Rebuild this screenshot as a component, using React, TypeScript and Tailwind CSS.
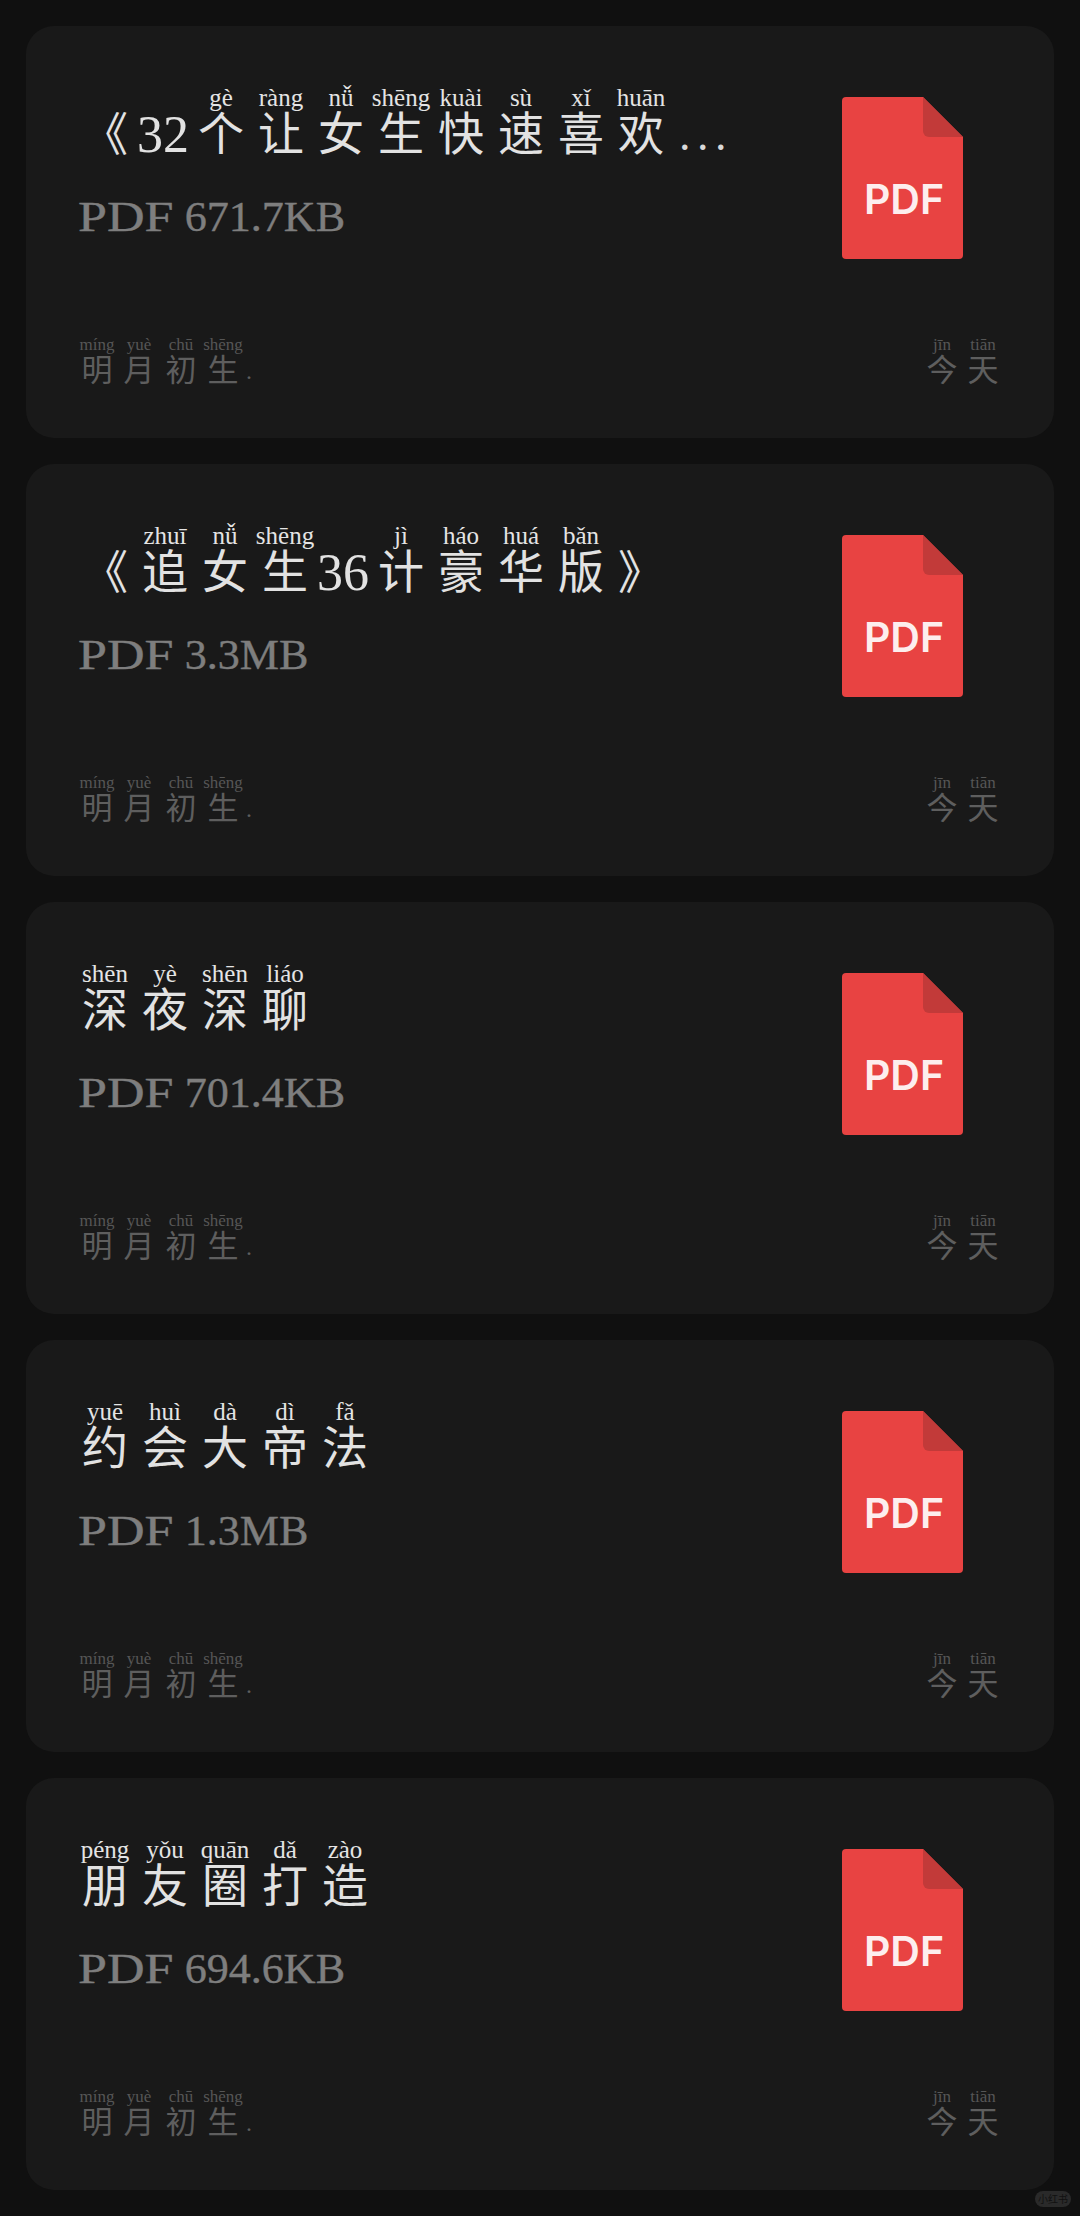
import React from 'react';

type Cell = { han: string; py?: string };

const FILES: { title: Cell[]; size: string }[] = [
  {
    title: [
      { han: '《' }, { han: '32' }, { han: '个', py: 'gè' }, { han: '让', py: 'ràng' }, { han: '女', py: 'nǚ' },
      { han: '生', py: 'shēng' }, { han: '快', py: 'kuài' }, { han: '速', py: 'sù' }, { han: '喜', py: 'xǐ' },
      { han: '欢', py: 'huān' }, { han: '...' },
    ],
    size: '671.7KB',
  },
  {
    title: [
      { han: '《' }, { han: '追', py: 'zhuī' }, { han: '女', py: 'nǚ' }, { han: '生', py: 'shēng' }, { han: '36' },
      { han: '计', py: 'jì' }, { han: '豪', py: 'háo' }, { han: '华', py: 'huá' }, { han: '版', py: 'bǎn' }, { han: '》' },
    ],
    size: '3.3MB',
  },
  {
    title: [{ han: '深', py: 'shēn' }, { han: '夜', py: 'yè' }, { han: '深', py: 'shēn' }, { han: '聊', py: 'liáo' }],
    size: '701.4KB',
  },
  {
    title: [{ han: '约', py: 'yuē' }, { han: '会', py: 'huì' }, { han: '大', py: 'dà' }, { han: '帝', py: 'dì' }, { han: '法', py: 'fǎ' }],
    size: '1.3MB',
  },
  {
    title: [{ han: '朋', py: 'péng' }, { han: '友', py: 'yǒu' }, { han: '圈', py: 'quān' }, { han: '打', py: 'dǎ' }, { han: '造', py: 'zào' }],
    size: '694.6KB',
  },
];

// 文件图标
const PdfIcon = () => (
  <svg width="121" height="162" viewBox="0 0 121 162" className="mt-[11px] mr-[39px] shrink-0">
    <path d="M4 0H81L121 40V158a4 4 0 0 1-4 4H4a4 4 0 0 1-4-4V4a4 4 0 0 1 4-4Z" fill="#e84342" />
    <path d="M81 0L121 40H87a6 6 0 0 1-6-6Z" fill="#c23a39" />
    <text x="62" y="117" textAnchor="middle" fontSize="41" fontWeight="600" fill="#fdeeee" fontFamily="Inter, sans-serif">PDF</text>
  </svg>
);

const TitleCell = ({ han, py }: Cell) => {
  if (!py && /^\d+$/.test(han)) {
    return <span className="self-end -ml-px text-[52px] leading-[50px] w-[51px] text-[#e2e2e2]">{han}</span>;
  }
  if (han === '...') {
    return <span className="self-end ml-[5px] text-[46px] leading-[50px] tracking-[6.5px] text-[#d8d8d8]">{han}</span>;
  }
  return (
    <span className="flex flex-col items-center w-[54px]">
      <span className="h-[24px] text-[25px] leading-[24px] whitespace-nowrap text-[#e4e4e4]">{py}</span>
      <span className="text-[46px] leading-[50px] text-[#e2e2e2]">{han}</span>
    </span>
  );
};

const SmallCell = ({ han, py }: Cell) => (
  <span className="flex flex-col items-center w-[38px]">
    <span className="text-[17px] leading-[18px] whitespace-nowrap text-[#565656]">{py}</span>
    <span className="text-[31px] leading-[34px] text-[#5e5e5e]">{han}</span>
  </span>
);

const FileCard = ({ title, size }: { title: Cell[]; size: string }) => (
  <div className="flex flex-col h-[412px] rounded-[28px] bg-[#191919] pt-[60px] pb-[50px] px-[52px]">
    <div className="flex justify-between items-start">
      <div className="flex flex-col">
        <div className="flex gap-[6px] h-[74px]">
          {title.map((c, i) => <TitleCell key={i} {...c} />)}
        </div>
        <p className="mt-[33px] text-[42px] leading-[48px] text-[#7e7e7e] [-webkit-text-stroke:0.4px_#7e7e7e] origin-left scale-x-[1.05]">
          <span className="inline-block origin-left scale-x-[1.18] mr-[14px]">PDF</span> {size}
        </p>
      </div>
      <PdfIcon />
    </div>
    <div className="mt-auto flex justify-between items-end">
      <div className="flex items-end gap-[4px]">
        <SmallCell han="明" py="míng" />
        <SmallCell han="月" py="yuè" />
        <SmallCell han="初" py="chū" />
        <SmallCell han="生" py="shēng" />
        <span className="text-[24px] leading-[34px] text-[#5e5e5e]">.</span>
      </div>
      <div className="flex gap-[3px]">
        <SmallCell han="今" py="jīn" />
        <SmallCell han="天" py="tiān" />
      </div>
    </div>
  </div>
);

export default function App() {
  return (
    <div className="relative min-h-[2216px] bg-[#101010] flex flex-col gap-[26px] p-[26px] font-['Liberation_Serif','Noto_Sans_CJK_SC',serif]">
      {FILES.map((f, i) => <FileCard key={i} title={f.title} size={f.size} />)}
      <span className="absolute right-[9px] bottom-[9px] w-[36px] h-[16px] rounded-full bg-[#2a2a2a] text-center text-[10px] leading-[16px] text-[#111] font-['Noto_Sans_CJK_SC',sans-serif]">小红书</span>
    </div>
  );
}
